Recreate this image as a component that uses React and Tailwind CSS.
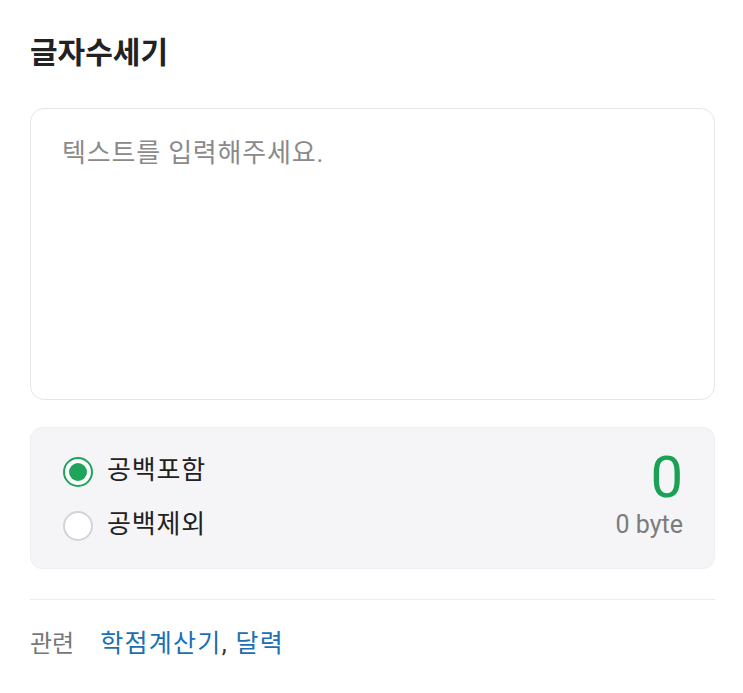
import React, { useState } from "react";

export default function App() {
  const [text, setText] = useState("");
  const [mode, setMode] = useState("with");
  const count = mode === "with" ? text.length : text.replace(/\s/g, "").length;
  const bytes = new TextEncoder().encode(text).length;

  const Radio = ({ checked, label, onClick }) => (
    <button type="button" onClick={onClick} className="flex items-center gap-[14px] h-[34px]">
      <span
        className={
          "w-[30px] h-[30px] rounded-full border-2 flex items-center justify-center bg-white " +
          (checked ? "border-[#1fa55a]" : "border-[#d4d4d8]")
        }
      >
        {checked && <span className="w-[18px] h-[18px] rounded-full bg-[#1fa55a]" />}
      </span>
      <span className="text-[26px] tracking-[0.8px] leading-none text-[#222] -mt-[4px]">{label}</span>
    </button>
  );

  return (
    <div
      className="w-[743px] h-[693px] bg-white pl-[30px] pr-[28px] pt-[30px]"
      style={{ fontFamily: "Roboto, 'Noto Sans CJK KR', sans-serif" }}
    >
      <h1 className="text-[30px] font-bold text-[#222] leading-[46px]">글자수세기</h1>
      <textarea
        value={text}
        onChange={(e) => setText(e.target.value)}
        placeholder="텍스트를 입력해주세요."
        className="mt-[32px] block w-full h-[292px] resize-none rounded-[14px] border border-[#e6e6e8] px-[31px] pt-[26px] text-[26px] tracking-[0.8px] leading-[36px] text-[#222] placeholder:text-[#8a8a8a] outline-none"
      />
      <div className="mt-[27px] h-[142px] rounded-[12px] bg-[#f5f5f7] border border-[#efeff1] pl-[32px] pr-[31px] flex items-center justify-between">
        <div className="flex flex-col gap-[20px] pt-[2px]">
          <Radio checked={mode === "with"} label="공백포함" onClick={() => setMode("with")} />
          <Radio checked={mode === "without"} label="공백제외" onClick={() => setMode("without")} />
        </div>
        <div className="flex flex-col items-end -mt-[8px]">
          <span className="text-[58px] leading-[58px] text-[#1aa156]">{count}</span>
          <span className="text-[25px] leading-[30px] text-[#7c7c7c] mt-[4px]">{bytes} byte</span>
        </div>
      </div>
      <div className="mt-[30px] border-t border-[#ececee] pt-[27px] flex items-center text-[24px] leading-[34px]">
        <span className="text-[#777]">관련</span>
        <span className="ml-[26px] text-[25px] tracking-[1.3px] text-[#1c6fb0]">
          <a href="#">학점계산기</a>
          <span className="text-[#333]">, </span>
          <a href="#">달력</a>
        </span>
      </div>
    </div>
  );
}
